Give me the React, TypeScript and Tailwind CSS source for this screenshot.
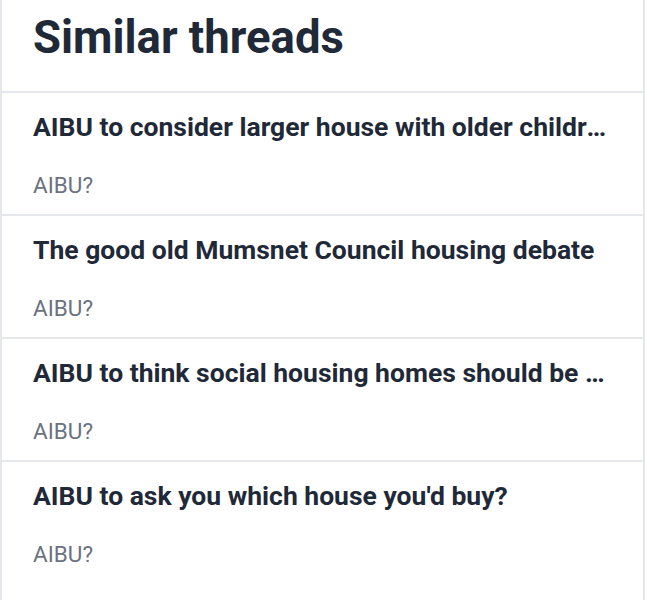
const threads = [
  { title: 'AIBU to consider larger house with older children moving out soon', topic: 'AIBU?' },
  { title: 'The good old Mumsnet Council housing debate', topic: 'AIBU?' },
  { title: 'AIBU to think social housing homes should be means tested again', topic: 'AIBU?' },
  { title: "AIBU to ask you which house you'd buy?", topic: 'AIBU?' },
];

export default function App() {
  return (
    <main className="min-h-screen w-full bg-white font-['Roboto',sans-serif]">
      <section className="flex w-[645px] flex-col border-x-2 border-[#e5e7eb] min-h-[600px]">
        {/* heading */}
        <div className="border-b-2 border-[#e5e7eb] px-[31px] pt-[8px] pb-[23px]">
          <h2 className="text-[45.5px] font-bold leading-[60px] text-[#1f2937]">Similar threads</h2>
        </div>

        {/* thread list */}
        <ul className="flex flex-col">
          {threads.map((t) => (
            <li
              key={t.title}
              className="border-b-2 border-[#e5e7eb] px-[31px] pt-[17px] pb-[14px] last:border-b-0"
            >
              <a href="#" className="block truncate text-[26.5px] font-bold leading-[34px] text-[#1f2937]">
                {t.title}
              </a>
              <p className="mt-[26px] text-[22.5px] leading-[30px] text-[#6b7280]">{t.topic}</p>
            </li>
          ))}
        </ul>
      </section>
    </main>
  );
}
